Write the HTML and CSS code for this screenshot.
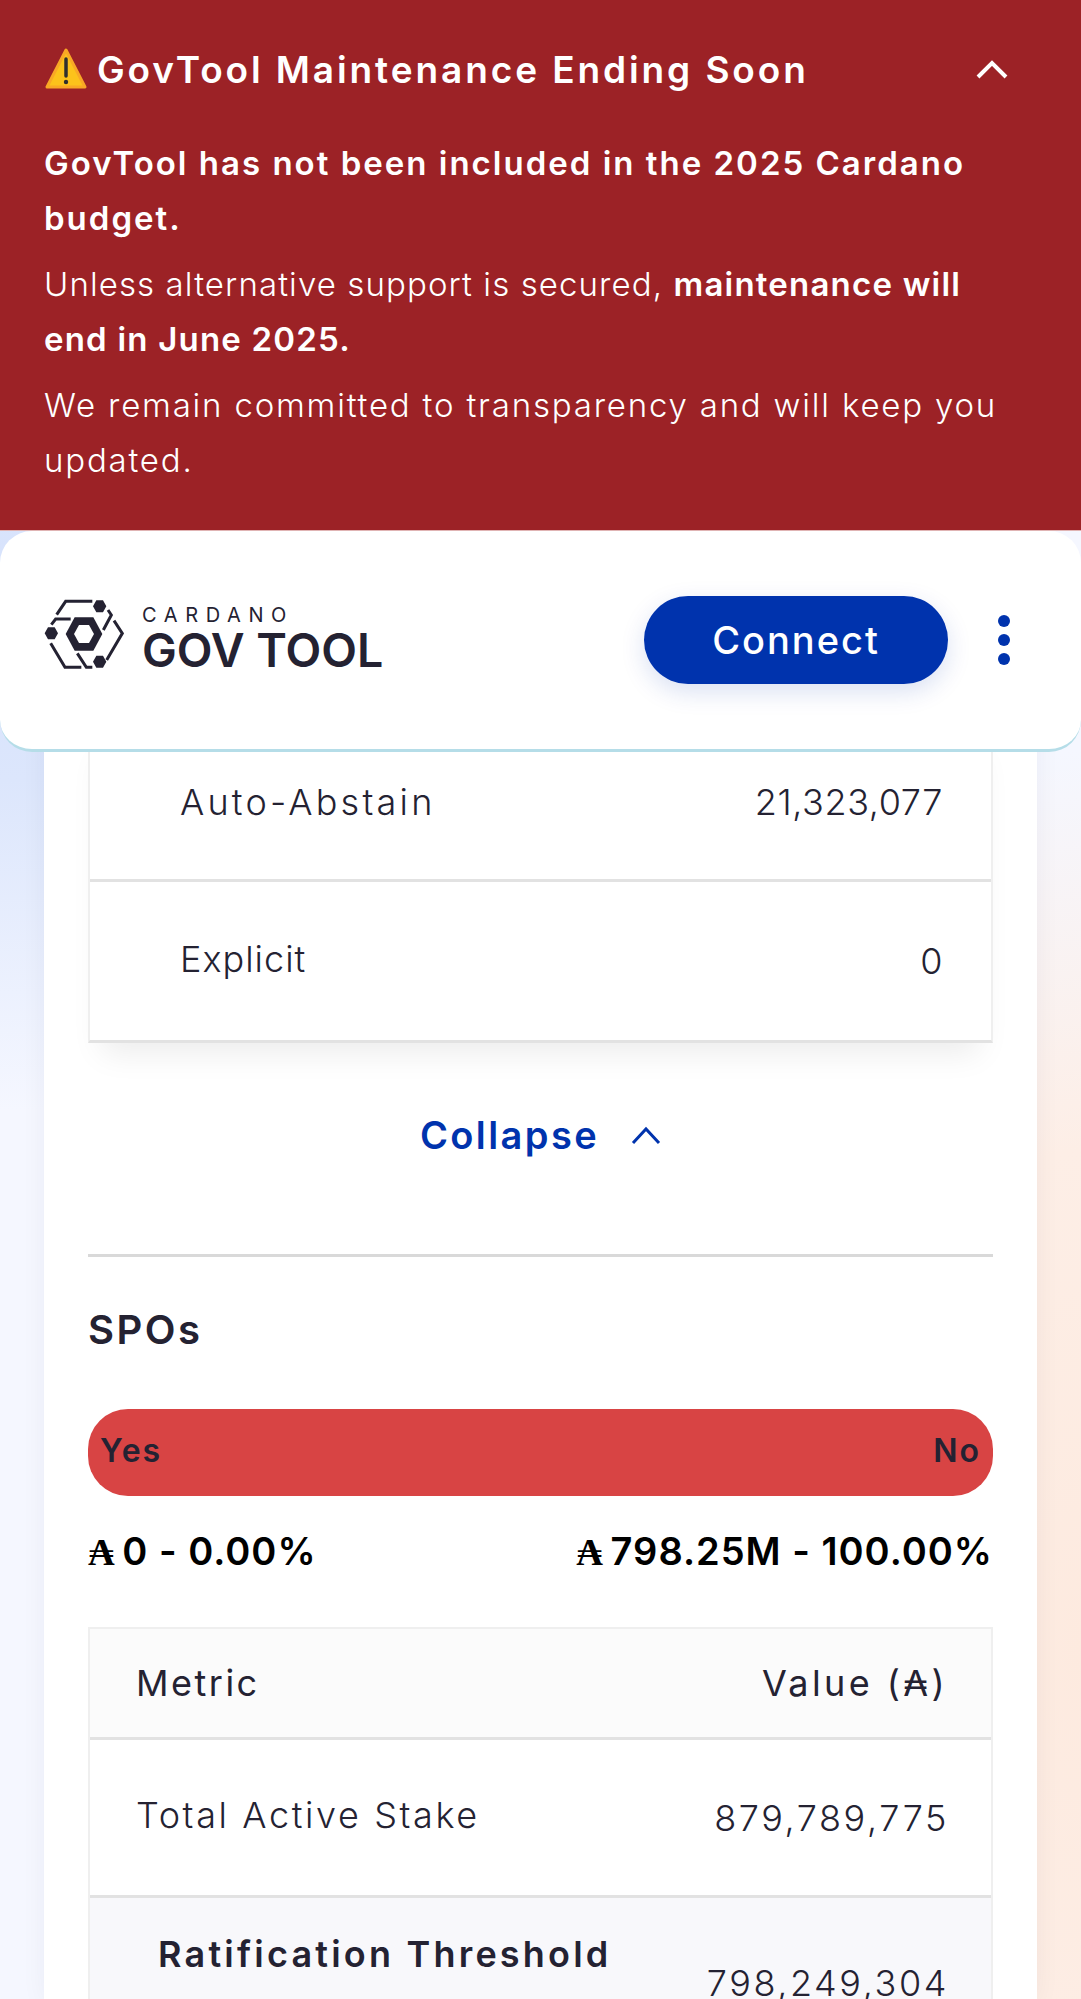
FILE: index.html
```html
<!DOCTYPE html>
<html lang="en">
<head>
    <meta charset="UTF-8">
    <meta name="viewport" content="width=device-width, initial-scale=1.0">
    <title>GovTool</title>
    <link rel="stylesheet" href="styles.css">
</head>
<body>
    <div class="top">
        <section class="banner">
            <div class="banner-head">
                <h2><svg class="warn" viewBox="0 0 44 44" width="44" height="44"><path d="M22 3 L41 40 H3 Z" fill="#fcc21b" stroke="#f9a825" stroke-width="3" stroke-linejoin="round"/><path d="M22 12 V29" stroke="#2f2f2f" stroke-width="3.5" stroke-linecap="round"/><circle cx="22" cy="35" r="2.2" fill="#2f2f2f"/></svg>GovTool Maintenance Ending Soon</h2>
                <svg class="chevron" viewBox="0 0 34 22" width="34" height="22"><path d="M3 19 L17 5 L31 19" fill="none" stroke="#fff" stroke-width="4"/></svg>
            </div>
            <p class="strong">GovTool has not been included in the 2025 Cardano budget.</p>
            <p class="light">Unless alternative support is secured, <b>maintenance will<br>end in June 2025.</b></p>
            <p class="light wider">We remain committed to transparency and will keep you updated.</p>
        </section>
        <header class="nav">
            <div class="logo">
                <svg viewBox="70 55 240 210" width="80" height="70" fill="none" stroke="#242232" stroke-width="9">
                    <path d="M108 102 L135 62 H215"/>
                    <path d="M92 132 L105 115 H150"/>
                    <path d="M262 88 L272 103 L248 148"/>
                    <path d="M280 120 L305 158 L258 238"/>
                    <path d="M90 188 L133 260 H182"/>
                    <path d="M170 218 L197 260 H215"/>
                    <path d="M135 160 L162 110 H218 L245 160 L218 210 H162 Z" fill="#242232" stroke="none"/>
                    <path d="M160 160 L175 133 H205 L220 160 L205 187 H175 Z" fill="#fff" stroke="none"/>
                    <path d="M217 77 L227 59 H247 L257 77 L247 95 H227 Z M217 243 L227 225 H247 L257 243 L247 261 H227 Z M72 158 L82 140 H102 L112 158 L102 176 H82 Z" fill="#242232" stroke="none"/>
                </svg>
                <div class="logo-text">
                    <span class="logo-small">CARDANO</span>
                    <span class="logo-big">GOV TOOL</span>
                </div>
            </div>
            <button class="connect">Connect</button>
            <svg class="dots" viewBox="0 0 12 50" width="12" height="50" fill="#0033ad"><circle cx="6" cy="6" r="6"/><circle cx="6" cy="25" r="6"/><circle cx="6" cy="44" r="6"/></svg>
        </header>
    </div>

    <main class="card">
        <div class="table first">
            <div class="row tall">
                <span class="name indent auto">Auto-Abstain</span>
                <span class="val">21,323,077</span>
            </div>
            <div class="row tall">
                <span class="name indent">Explicit</span>
                <span class="val">0</span>
            </div>
        </div>

        <div class="collapse">
            <span>Collapse</span>
            <svg viewBox="0 0 30 20" width="30" height="20"><path d="M2 18 L15 4 L28 18" fill="none" stroke="#0033ad" stroke-width="3"/></svg>
        </div>

        <h3 class="section">SPOs</h3>
        <div class="bar"><span>Yes</span><span>No</span></div>
        <div class="totals">
            <span><i>₳</i> 0 - 0.00%</span>
            <span><i>₳</i> 798.25M - 100.00%</span>
        </div>

        <div class="table">
            <div class="row head">
                <span class="name">Metric</span>
                <span class="val">Value (₳)</span>
            </div>
            <div class="row tall">
                <span class="name spaced">Total Active Stake</span>
                <span class="val spaced">879,789,775</span>
            </div>
            <div class="row shaded">
                <span class="name sub">Ratification Threshold</span>
                <span class="val spaced">798,249,304</span>
            </div>
        </div>
    </main>
</body>
</html>
```

FILE: styles.css
```css
* {
    box-sizing: border-box;
}
html, body {
    height: 1999px;
    overflow: hidden;
}
body {
    margin: 0;
    font-family: "Inter", "Open Sans", sans-serif;
    color: #242232;
    background:
        radial-gradient(400px 1000px at 1081px 1650px, #fdeadf 0, #fdeee6 50%, rgba(253, 238, 230, 0) 90%),
        radial-gradient(900px 600px at 0 600px, #d6e2fc 0, #dce6fc 30%, rgba(220, 230, 252, 0) 85%),
        #f5f7ff;
}
.top {
    position: relative;
    z-index: 2;
}
.banner {
    height: 531px;
    padding: 41px 44px 0;
    background: #9c2226;
    border-bottom: 1px solid #e0b4b4;
    color: #fff;
}
.banner-head {
    display: flex;
    justify-content: space-between;
    align-items: center;
    padding-right: 28px;
    height: 56px;
    margin-bottom: 39px;
}
.banner-head h2 {
    display: flex;
    align-items: center;
    gap: 9px;
    margin: 0;
    font-size: 37px;
    font-weight: 600;
    letter-spacing: 2.9px;
    white-space: nowrap;
}
.warn {
    flex: none;
}
.banner p {
    margin: 0 0 11px;
    font-size: 33px;
    line-height: 55px;
    font-weight: 300;
}
.banner .strong {
    font-weight: 600;
    letter-spacing: 2px;
}
.banner .light {
    letter-spacing: 1.1px;
}
.banner .wider {
    letter-spacing: 1.8px;
}
.banner b {
    font-weight: 600;
    letter-spacing: 1.2px;
}
.nav {
    display: flex;
    align-items: center;
    height: 221px;
    padding: 0 71px 0 44px;
    background: #fff;
    border-radius: 32px;
    border-bottom: 3px solid #b5dde8;
}
.logo {
    display: flex;
    align-items: center;
    gap: 18px;
    flex: 1;
}
.logo svg {
    margin-bottom: 12px;
}
.logo-text {
    display: flex;
    flex-direction: column;
    margin-bottom: 4px;
}
.logo-small {
    font-size: 20px;
    line-height: 24px;
    letter-spacing: 7.6px;
}
.logo-big {
    font-size: 46.5px;
    line-height: 47px;
    font-weight: 600;
}
.connect {
    width: 304px;
    height: 88px;
    margin-right: 50px;
    border: none;
    border-radius: 44px;
    background: #0033ad;
    color: #fff;
    font-family: "Inter", sans-serif;
    font-size: 38px;
    font-weight: 500;
    letter-spacing: 2px;
    box-shadow: 0 8px 24px rgba(0, 51, 173, 0.15);
}
.card {
    width: 993px;
    height: 1280px;
    margin: -30px 0 0 44px;
    padding: 0 44px;
    background: #fff;
    box-shadow: 0 0 24px rgba(0, 0, 60, 0.05);
}
.table {
    border: 2px solid #efefef;
    border-bottom: 3px solid #e2e2e2;
}
.first {
    box-shadow: 0 24px 30px -14px rgba(0, 0, 0, 0.08);
}
.row {
    display: flex;
    justify-content: space-between;
    align-items: center;
    padding: 0 46px;
    font-size: 36px;
    font-weight: 300;
    border-bottom: 3px solid #e2e2e2;
}
.row:last-child {
    border-bottom: none;
}
.name {
    padding-bottom: 5px;
    letter-spacing: 1px;
}
.val {
    padding-right: 2px;
    letter-spacing: 0.6px;
}
.auto {
    padding-bottom: 0;
    letter-spacing: 3.2px;
}
.spaced {
    letter-spacing: 2.6px;
}
.val.spaced {
    margin-right: -6px;
}
.tall {
    height: 158px;
}
.head {
    height: 111px;
    background: #fbfbfb;
    font-weight: 400;
}
.head .name {
    padding-bottom: 0;
    letter-spacing: 2.5px;
}
.head .val {
    margin-right: -5px;
    letter-spacing: 3.4px;
}
.shaded {
    height: 170px;
    background: #f8f8fb;
}
.indent {
    margin-left: 44px;
}
.sub {
    align-self: flex-start;
    margin: 34px 0 0 22px;
    font-weight: 600;
    letter-spacing: 3.2px;
}
.collapse {
    display: flex;
    justify-content: center;
    align-items: center;
    gap: 32px;
    height: 214px;
    padding-bottom: 28px;
    border-bottom: 3px solid #d9d9d9;
    color: #0033ad;
    font-size: 38px;
    font-weight: 600;
    letter-spacing: 2.4px;
}
.section {
    margin: 0;
    height: 152px;
    padding-top: 48px;
    font-size: 40px;
    font-weight: 600;
    letter-spacing: 2.5px;
}
.bar {
    display: flex;
    justify-content: space-between;
    align-items: center;
    height: 87px;
    padding: 0 12px 4px;
    border-radius: 40px;
    background: #d84444;
    font-size: 32px;
    font-weight: 600;
    letter-spacing: 2px;
}
.totals {
    display: flex;
    justify-content: space-between;
    height: 131px;
    padding-top: 32px;
    color: #000;
    font-size: 38px;
    font-weight: 600;
    letter-spacing: 1px;
}
.totals i {
    margin-right: -3px;
    font-style: normal;
    font-family: "DejaVu Serif", serif;
    font-size: 37px;
    font-weight: 700;
    letter-spacing: 0;
}
```
